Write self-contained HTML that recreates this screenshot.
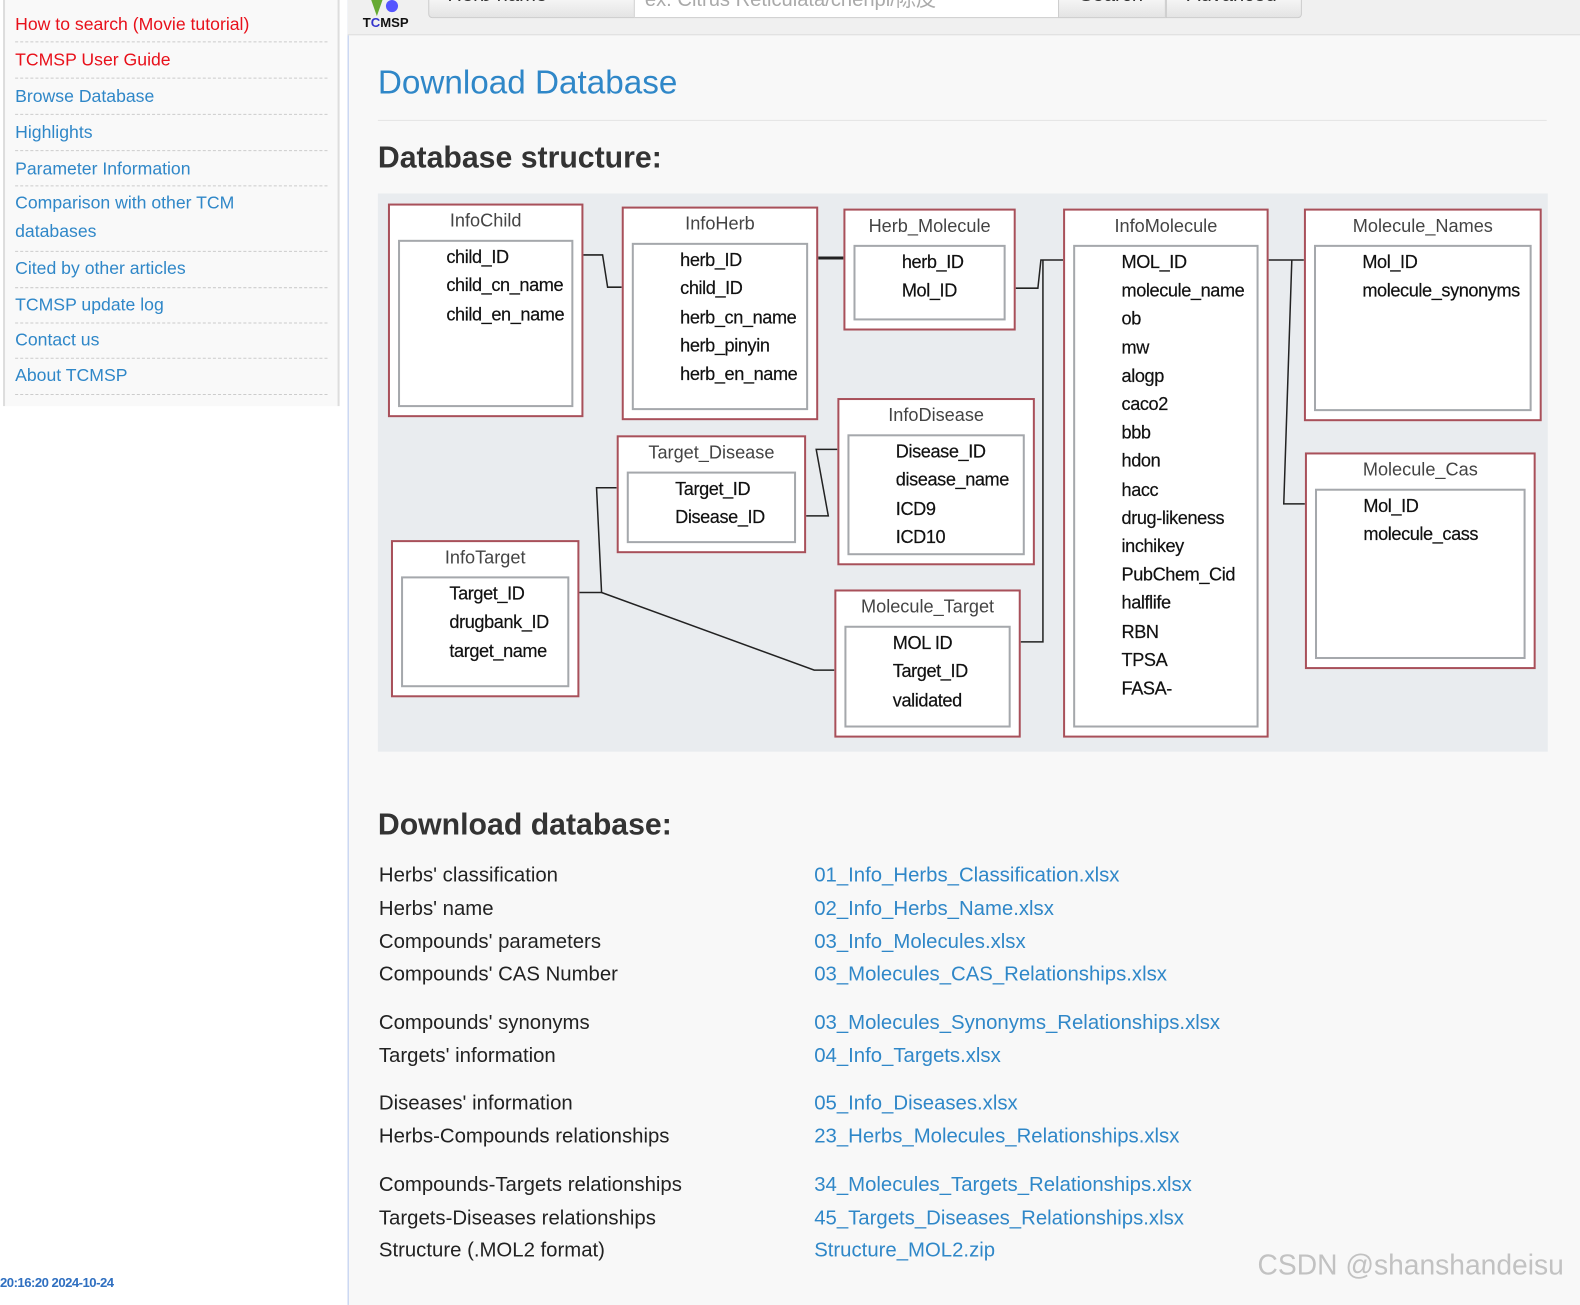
<!DOCTYPE html>
<html><head><meta charset="utf-8"><style>
*{margin:0;padding:0;box-sizing:border-box}
body{width:1580px;height:1295px;position:relative;background:#fff;font-family:"Liberation Sans","Noto Sans CJK SC",sans-serif;overflow:hidden}
#w{position:absolute;left:0;top:0;width:1568px;height:1286px;transform:scale(1.00766);transform-origin:0 0}
.side{position:absolute;left:3px;top:0;width:334px;height:403px;background:#f9f9f9;border-left:2px solid #ddd;border-right:2px solid #ddd}
.side a{position:absolute;left:10px;width:308px;font-size:17.5px;color:#2f87c8;text-decoration:none;line-height:28px}
.side .d{position:absolute;left:10px;width:310px;border-top:1px dashed #ccc}
.main{position:absolute;left:345px;top:0;width:1235px;height:1295px;background:#f8f8f8;border-left:1px solid #b5c8ef}
.hdr{position:absolute;left:345px;top:0;width:1235px;height:35px;background:#f0f0f0;border-bottom:1px solid #ddd;overflow:hidden}
.btn{position:absolute;top:-2px;height:20px;background:linear-gradient(#f6f6f6,#e4e4e4);border:1px solid #ccc;border-radius:0 0 4px 4px;overflow:hidden}
.bt{position:absolute;top:-15px;font-size:20px;color:#333;white-space:nowrap}
h1{position:absolute;left:375px;top:63px;font-size:33px;font-weight:normal;color:#2f87c8}
h2{position:absolute;left:375px;font-size:30px;font-weight:bold;color:#333}
.dg{position:absolute;left:375px;top:192px;width:1161px;height:554px;background:#e9ecef}
.b{position:absolute;background:#fff;border:2px solid #a8505a}
.b .t{position:absolute;left:0;right:0;top:5px;text-align:center;font-size:18px;color:#444}
.b .i{position:absolute;border:2px solid #a5a8ac;left:8px;right:8px;top:34px;bottom:8px}
.b .f{position:absolute;font-size:18px;letter-spacing:-0.4px;color:#111;line-height:28.3px;white-space:nowrap;-webkit-text-stroke:0.2px #111}
.row{position:absolute;font-size:20.2px;color:#222}
.lk{position:absolute;left:808px;font-size:20.2px;color:#2f87c8}
</style></head><body><div id="w">
<div class="side">
<a style="top:10px;color:#e8101a">How to search (Movie tutorial)</a><div class="d" style="top:41px"></div>
<a style="top:45px;color:#e8101a">TCMSP User Guide</a><div class="d" style="top:77px"></div>
<a style="top:81px">Browse Database</a><div class="d" style="top:113px"></div>
<a style="top:117px">Highlights</a><div class="d" style="top:149px"></div>
<a style="top:153px">Parameter Information</a><div class="d" style="top:184px"></div>
<a style="top:187px">Comparison with other TCM<br>databases</a><div class="d" style="top:249px"></div>
<a style="top:252px">Cited by other articles</a><div class="d" style="top:285px"></div>
<a style="top:288px">TCMSP update log</a><div class="d" style="top:320px"></div>
<a style="top:323px">Contact us</a><div class="d" style="top:355px"></div>
<a style="top:358px">About TCMSP</a><div class="d" style="top:391px"></div>
</div>
<div style="position:absolute;left:0;top:1265px;font-size:13px;color:#2f6fc0;font-weight:bold;letter-spacing:-0.5px">20:16:20 2024-10-24</div>
<div class="main"></div>
<div class="hdr">
<div style="position:absolute;left:22px;top:-4px;width:14px;height:20px;background:#6a3;clip-path:polygon(0 0,100% 0,50% 100%)"></div>
<div style="position:absolute;left:38px;top:0;width:12px;height:12px;border-radius:50%;background:#55f"></div>
<div style="position:absolute;left:15px;top:15px;font-size:13px;font-weight:bold;color:#111">T<span style="color:#33c">C</span>MSP</div>
<div class="btn" style="left:80px;width:205px;border-radius:0 0 0 4px"><div class="bt" style="left:18px">Herb name</div></div>
<div style="position:absolute;left:285px;top:-2px;width:420px;height:20px;background:#fff;border-bottom:1px solid #ccc;overflow:hidden"><div class="bt" style="left:10px;color:#aaa">ex: Citrus Reticulata/chenpi/陈皮</div></div>
<div class="btn" style="left:705px;width:107px;border-radius:0"><div class="bt" style="left:20px">Search</div></div>
<div class="btn" style="left:812px;width:135px;border-radius:0 0 4px 0"><div class="bt" style="left:20px">Advanced</div></div>
</div>
<h1>Download Database</h1>
<div style="position:absolute;left:375px;top:119px;width:1160px;border-top:1px solid #e5e5e5"></div>
<h2 style="top:140px">Database structure:</h2>
<div class="dg"></div>
<svg style="position:absolute;left:0;top:0" width="1580" height="1295" fill="none" stroke="#222" stroke-width="1.5">
<path d="M578 253H598L603 285H617"/><path d="M811 256H837" stroke-width="3"/>
<path d="M1007 286H1030L1033 258H1055"/><path d="M1012 637H1035V258"/>
<path d="M1258 258H1294"/><path d="M1282 258L1274 500H1295"/>
<path d="M799 512H822L810 446H831"/>
<path d="M574 588H597L592 484H612"/><path d="M597 588L808 665H828"/>
</svg>
<div class="b" style="left:385px;top:202px;width:194px;height:212px"><div class="t">InfoChild</div><div class="i"></div><div class="f" style="left:56px;top:37px">child_ID<br>child_cn_name<br>child_en_name</div></div>
<div class="b" style="left:617px;top:205px;width:195px;height:212px"><div class="t">InfoHerb</div><div class="i"></div><div class="f" style="left:56px;top:37px">herb_ID<br>child_ID<br>herb_cn_name<br>herb_pinyin<br>herb_en_name</div></div>
<div class="b" style="left:837px;top:207px;width:171px;height:121px"><div class="t">Herb_Molecule</div><div class="i"></div><div class="f" style="left:56px;top:37px">herb_ID<br>Mol_ID</div></div>
<div class="b" style="left:1055px;top:207px;width:204px;height:525px"><div class="t">InfoMolecule</div><div class="i"></div><div class="f" style="left:56px;top:37px;line-height:28.2px">MOL_ID<br>molecule_name<br>ob<br>mw<br>alogp<br>caco2<br>bbb<br>hdon<br>hacc<br>drug-likeness<br>inchikey<br>PubChem_Cid<br>halflife<br>RBN<br>TPSA<br>FASA-</div></div>
<div class="b" style="left:1294px;top:207px;width:236px;height:211px"><div class="t">Molecule_Names</div><div class="i"></div><div class="f" style="left:56px;top:37px">Mol_ID<br>molecule_synonyms</div></div>
<div class="b" style="left:1295px;top:449px;width:229px;height:215px"><div class="t">Molecule_Cas</div><div class="i"></div><div class="f" style="left:56px;top:37px">Mol_ID<br>molecule_cass</div></div>
<div class="b" style="left:831px;top:395px;width:196px;height:166px"><div class="t">InfoDisease</div><div class="i"></div><div class="f" style="left:56px;top:37px">Disease_ID<br>disease_name<br>ICD9<br>ICD10</div></div>
<div class="b" style="left:612px;top:432px;width:188px;height:117px"><div class="t">Target_Disease</div><div class="i"></div><div class="f" style="left:56px;top:37px">Target_ID<br>Disease_ID</div></div>
<div class="b" style="left:388px;top:536px;width:187px;height:156px"><div class="t">InfoTarget</div><div class="i"></div><div class="f" style="left:56px;top:37px">Target_ID<br>drugbank_ID<br>target_name</div></div>
<div class="b" style="left:828px;top:585px;width:185px;height:147px"><div class="t">Molecule_Target</div><div class="i"></div><div class="f" style="left:56px;top:37px">MOL ID<br>Target_ID<br>validated</div></div>
<h2 style="top:802px">Download database:</h2>
<div class="row" style="left:376px;top:858px">Herbs' classification</div><div class="lk" style="top:858px">01_Info_Herbs_Classification.xlsx</div>
<div class="row" style="left:376px;top:891px">Herbs' name</div><div class="lk" style="top:891px">02_Info_Herbs_Name.xlsx</div>
<div class="row" style="left:376px;top:924px">Compounds' parameters</div><div class="lk" style="top:924px">03_Info_Molecules.xlsx</div>
<div class="row" style="left:376px;top:956px">Compounds' CAS Number</div><div class="lk" style="top:956px">03_Molecules_CAS_Relationships.xlsx</div>
<div class="row" style="left:376px;top:1004px">Compounds' synonyms</div><div class="lk" style="top:1004px">03_Molecules_Synonyms_Relationships.xlsx</div>
<div class="row" style="left:376px;top:1037px">Targets' information</div><div class="lk" style="top:1037px">04_Info_Targets.xlsx</div>
<div class="row" style="left:376px;top:1084px">Diseases' information</div><div class="lk" style="top:1084px">05_Info_Diseases.xlsx</div>
<div class="row" style="left:376px;top:1117px">Herbs-Compounds relationships</div><div class="lk" style="top:1117px">23_Herbs_Molecules_Relationships.xlsx</div>
<div class="row" style="left:376px;top:1165px">Compounds-Targets relationships</div><div class="lk" style="top:1165px">34_Molecules_Targets_Relationships.xlsx</div>
<div class="row" style="left:376px;top:1198px">Targets-Diseases relationships</div><div class="lk" style="top:1198px">45_Targets_Diseases_Relationships.xlsx</div>
<div class="row" style="left:376px;top:1230px">Structure (.MOL2 format)</div><div class="lk" style="top:1230px">Structure_MOL2.zip</div>
<div style="position:absolute;left:1248px;top:1240px;font-size:28px;color:rgba(150,150,150,.55)">CSDN @shanshandeisu</div>
</div></body></html>
